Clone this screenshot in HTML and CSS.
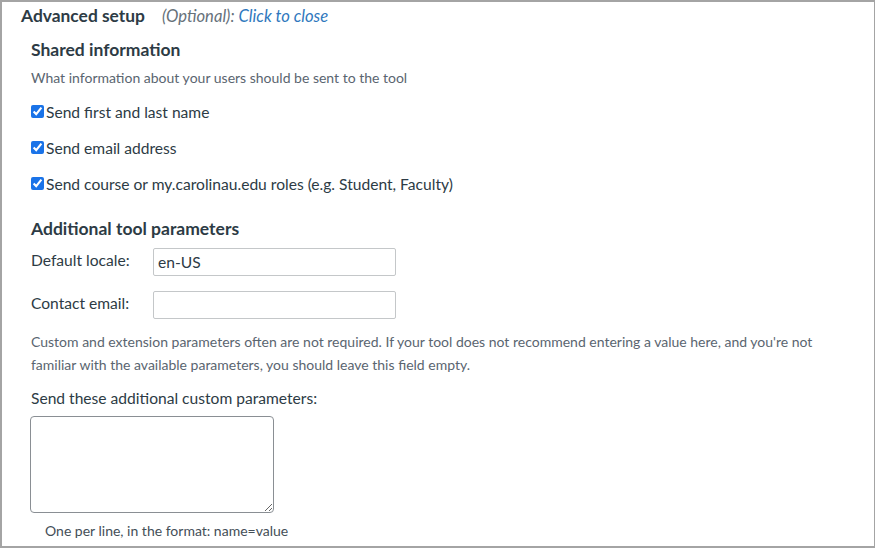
FILE: index.html
```html
<!DOCTYPE html>
<html lang="en">
<head>
<meta charset="utf-8">
<title>Advanced setup</title>
<link rel="stylesheet" href="styles.css">
</head>
<body>
<div class="frame">
  <div class="header">
    <span class="header-title">Advanced setup</span>
    <span class="header-optional">(Optional): <a class="header-link" href="#">Click to close</a></span>
  </div>
  <div class="section">
    <h3 class="section-title">Shared information</h3>
    <p class="hint">What information about your users should be sent to the tool</p>
    <label class="check-row"><input type="checkbox" class="check" checked><span>Send first and last name</span></label>
    <label class="check-row"><input type="checkbox" class="check" checked><span>Send email address</span></label>
    <label class="check-row"><input type="checkbox" class="check" checked><span>Send course or my.carolinau.edu roles (e.g. Student, Faculty)</span></label>

    <h3 class="section-title section-title-2">Additional tool parameters</h3>
    <div class="field-row field-row-1">
      <label class="field-label">Default locale:</label>
      <input class="text-input" type="text" value="en-US">
    </div>
    <div class="field-row field-row-2">
      <label class="field-label">Contact email:</label>
      <input class="text-input" type="text" value="">
    </div>
    <p class="note">Custom and extension parameters often are not required. If your tool does not recommend entering a value here, and you're not familiar with the available parameters, you should leave this field empty.</p>
    <p class="custom-label">Send these additional custom parameters:</p>
    <textarea class="custom-area"></textarea>
    <p class="custom-help">One per line, in the format: name=value</p>
  </div>
</div>
</body>
</html>
```

FILE: styles.css
```css
* { box-sizing: border-box; }
html, body { margin: 0; padding: 0; background: #ffffff; }
body {
  font-family: Lato, "Open Sans", "Liberation Sans", sans-serif;
  color: #2d3b45;
}
.frame {
  width: 875px;
  height: 548px;
  border: 2px solid #a4a4a4;
  border-right-width: 1px;
  overflow: hidden;
  background: #fff;
}
.header {
  padding-left: 19px;
  height: 28px;
  line-height: 28px;
  white-space: nowrap;
}
.header-title {
  font-size: 17.4px;
  font-weight: 700;
  color: #2d3b45;
}
.header-optional {
  margin-left: 13px;
  font-size: 16.6px;
  font-style: italic;
  color: #66717a;
}
.header-link {
  color: #2f78bd;
  text-decoration: none;
}
.section {
  padding-left: 29px;
}
.section-title {
  margin: 8px 0 0;
  font-size: 17.5px;
  line-height: 24px;
  font-weight: 700;
  color: #2d3b45;
}
.section-title-2 { margin-top: 15px; }
.hint {
  margin: 6px 0 6px;
  font-size: 14px;
  line-height: 20px;
  color: #5a6570;
}
.check-row {
  display: flex;
  align-items: center;
  height: 36px;
  font-size: 15.6px;
  color: #2d3b45;
}
.check {
  width: 13px;
  height: 13px;
  margin: 0 2px 1px 0;
  accent-color: #1a73e8;
}
.field-row {
  display: flex;
  align-items: flex-start;
}
.field-row-1 { margin-top: 7px; }
.field-row-2 { margin-top: 15px; }
.field-label {
  width: 122px;
  font-size: 15.6px;
  line-height: 24px;
  color: #2d3b45;
}
.text-input {
  width: 243px;
  height: 28px;
  margin: 0;
  padding: 0 4px;
  border: 1px solid #c4c7c9;
  border-radius: 2px;
  font-family: inherit;
  font-size: 15.6px;
  color: #2d3b45;
  background: #fff;
  outline: none;
}
.note {
  margin: 11px 0 0;
  font-size: 14px;
  line-height: 23px;
  color: #5a6570;
  padding-right: 40px;
}
.custom-label {
  margin: 11px 0 0;
  font-size: 15.6px;
  line-height: 22px;
  color: #2d3b45;
}
.custom-area {
  display: block;
  width: 244px;
  height: 97px;
  margin: 7px 0 0 -1px;
  border: 1px solid #8a8f94;
  border-radius: 4px;
  resize: vertical;
  font-family: inherit;
  background: #fff;
}
.custom-help {
  margin: 8px 0 0;
  padding-left: 14px;
  font-size: 14px;
  line-height: 20px;
  color: #444e57;
}
```
